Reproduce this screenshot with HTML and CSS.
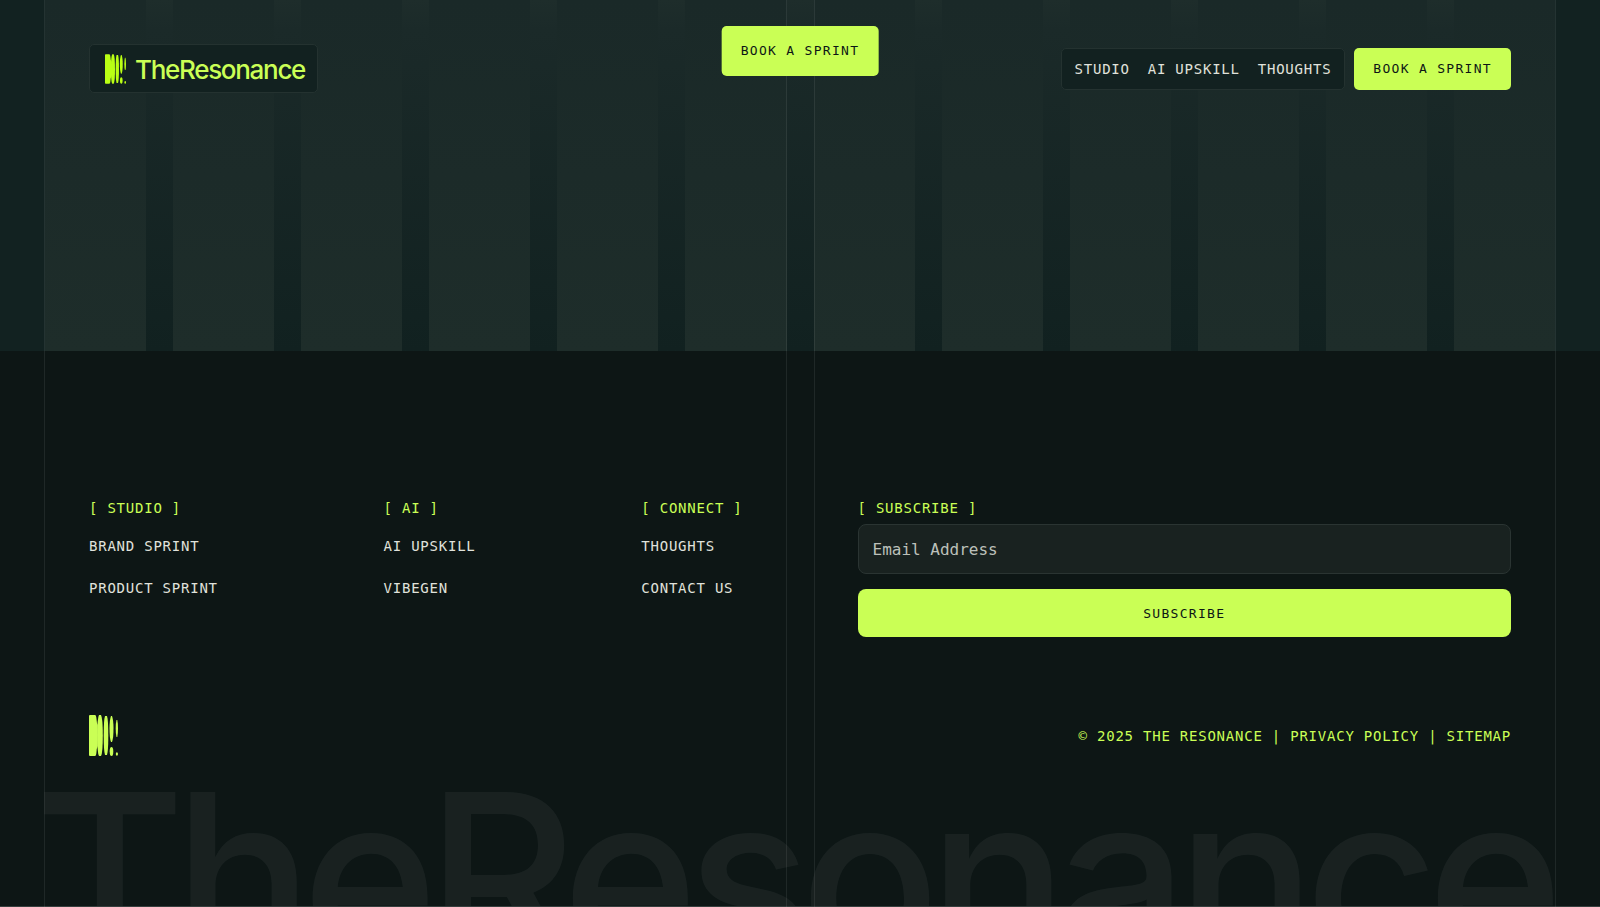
FILE: index.html
```html
<!DOCTYPE html>
<html lang="en">
<head>
    <title>TheResonance</title>
    <meta charset="UTF-8">
    <meta name="viewport" content="width=device-width, initial-scale=1">
    <link rel="stylesheet" href="styles.css">
</head>

<body>
    <svg width="0" height="0" class="sprite" aria-hidden="true">
        <symbol id="mark" viewBox="0 0 29 41">
            <path d="M1 0H6Q7.200 0 7.500 4Q7.700 8 8.800 10V31Q7.700 33 7.500 37Q7.200 41 6 41H1Q0 41 0 40V1Q0 0 1 0Z"/>
            <path d="M10 0H12Q13.800 3 13.800 20.500Q13.800 38 12 41H10Q8.200 38 8.200 20.500Q8.200 3 10 0Z"/>
            <path d="M16 1H18Q19.300 5 19.300 20.500Q19.300 36 18 40H16Q14.700 36 14.700 20.500Q14.700 5 16 1Z"/>
            <path d="M22 1H23Q24.500 5 24.500 13.500Q24.500 23 23 27H22Q20.500 23 20.500 13.500Q20.500 5 22 1Z"/>
            <ellipse cx="22.500" cy="36.500" rx="1.800" ry="4.500"/>
            <path d="M27.500 5H28.300Q29 8 29 13.500Q29 19 28.300 22H27.500Q26.700 19 26.700 13.500Q26.700 8 27.500 5Z"/>
            <ellipse cx="27.900" cy="39" rx="1.100" ry="1.800"/>
        </symbol>
    </svg>

    <div class="page">
        <section class="hero">
            <div class="stripes">
                <span></span><span></span><span></span><span></span><span></span><span></span>
                <span></span><span></span><span></span><span></span><span></span><span></span>
            </div>
            <header class="header">
                <a href="#" class="logo">
                    <svg class="logo-mark"><use href="#mark"/></svg>
                    <span class="logo-text">TheResonance</span>
                </a>
                <div class="header-right">
                    <nav class="nav">
                        <a href="#">Studio</a>
                        <a href="#">AI Upskill</a>
                        <a href="#">Thoughts</a>
                    </nav>
                    <a href="#" class="btn">Book a Sprint</a>
                </div>
            </header>
        </section>

        <footer class="footer">
            <div class="footer-top">
                <div class="footer-links">
                    <div class="links-col">
                        <h2>[ Studio ]</h2>
                        <a href="#">Brand Sprint</a>
                        <a href="#">Product Sprint</a>
                    </div>
                    <div class="links-col">
                        <h2>[ AI ]</h2>
                        <a href="#">AI Upskill</a>
                        <a href="#">Vibegen</a>
                    </div>
                    <div class="links-col">
                        <h2>[ Connect ]</h2>
                        <a href="#">Thoughts</a>
                        <a href="#">Contact us</a>
                    </div>
                </div>
                <form class="subscribe">
                    <label for="email">[ Subscribe ]</label>
                    <input type="email" id="email" placeholder="Email Address">
                    <button type="button">Subscribe</button>
                </form>
            </div>
            <div class="footer-bottom">
                <svg class="footer-mark"><use href="#mark"/></svg>
                <p class="legal">© 2025 The Resonance | <a href="#">Privacy Policy</a> | <a href="#">Sitemap</a></p>
            </div>
            <div class="wordmark">TheResonance</div>
        </footer>

        <div class="guides"><span></span><span></span></div>
        <a href="#" class="btn btn-float">Book a Sprint</a>
    </div>
</body>
</html>
```
FILE: styles.css
```css
* {
    box-sizing: border-box;
}

body {
    margin: 0;
    background: #0d1615;
    color: #e0e2dc;
    font-family: "DejaVu Sans Mono", "Liberation Mono", monospace;
    font-size: 14px;
    line-height: 20px;
    letter-spacing: 0.055em;
}

a {
    color: inherit;
    text-decoration: none;
    text-transform: uppercase;
}

.sprite {
    position: absolute;
}

.page {
    position: relative;
    overflow: hidden;
}

/* hero */
.hero {
    position: relative;
    height: 351px;
    background: linear-gradient(#1e2d2b, #1b2a29 30px, #112120) no-repeat 45px 0 / calc(100% - 90px) 100%, #122221;
}

.stripes {
    position: absolute;
    inset: 0;
    padding: 0 45px;
    display: grid;
    grid-template-columns: repeat(12, 1fr);
    gap: 27px;
}

.stripes span {
    background: linear-gradient(#1a2928, #1e2d2a);
}

.header {
    position: relative;
    display: flex;
    justify-content: space-between;
    align-items: center;
    padding: 44px 89px;
}

.logo {
    display: flex;
    align-items: center;
    gap: 9px;
    height: 49px;
    padding: 0 12px 0 15px;
    border: 1px solid #243230;
    border-radius: 5px;
    background: #122120;
    color: #caff55;
    text-transform: none;
}

.logo-mark {
    width: 21px;
    height: 30px;
    fill: #baff14;
}

.logo-text {
    padding-top: 2px;
    font-family: Inter, "Liberation Sans", sans-serif;
    font-size: 26px;
    font-weight: 500;
    line-height: 32px;
    letter-spacing: -0.05em;
}

.header-right {
    display: flex;
    gap: 9px;
}

.nav {
    display: flex;
    align-items: center;
    gap: 18px;
    padding: 0 13px;
    border: 1px solid #243230;
    border-radius: 5px;
    background: #122120;
}

.btn {
    display: flex;
    align-items: center;
    height: 42px;
    padding: 0 19px;
    border-radius: 5px;
    background: #caff55;
    color: #0d1615;
    font-size: 13px;
    letter-spacing: 0.1em;
}

.btn-float {
    position: absolute;
    top: 26px;
    left: 50%;
    height: 50px;
    transform: translateX(-50%);
}

/* footer */
.footer-top {
    display: grid;
    grid-template-columns: 1fr 1fr;
    gap: 27px;
    padding: 147px 45px 0;
}

.footer-links {
    display: flex;
    justify-content: space-between;
    padding: 0 44px;
}

.links-col {
    display: flex;
    flex-direction: column;
    gap: 22px;
}

.links-col h2 {
    margin: 0 0 -4px;
    color: #caff55;
    font-size: 14px;
    font-weight: 400;
    text-transform: uppercase;
}

.subscribe {
    display: flex;
    flex-direction: column;
    padding: 0 44px;
}

.subscribe label {
    margin-bottom: 6px;
    color: #caff55;
    text-transform: uppercase;
}

.subscribe input {
    height: 50px;
    margin-bottom: 15px;
    padding: 0 14px;
    border: 1px solid #2a3432;
    border-radius: 8px;
    background: #192220;
    color: #e0e2dc;
    font-family: inherit;
    font-size: 16px;
}

.subscribe input::placeholder {
    color: #bcc0ba;
}

.subscribe button {
    height: 48px;
    border: 0;
    border-radius: 8px;
    background: #caff55;
    color: #0d1615;
    font-family: inherit;
    font-size: 13px;
    letter-spacing: 0.1em;
    text-transform: uppercase;
}

.footer-bottom {
    display: flex;
    justify-content: space-between;
    align-items: center;
    padding: 78px 89px 34px;
    color: #caff55;
}

.footer-mark {
    width: 29px;
    height: 41px;
    fill: #caff55;
}

.legal {
    margin: 0;
    text-transform: uppercase;
}

/* giant name, cropped by the end of the page */
.wordmark {
    height: 117px;
    padding: 0 34px;
    overflow: hidden;
    border-bottom: 1px solid #363f3e;
    color: rgba(255, 255, 255, 0.05);
    font-family: Inter, "Liberation Sans", sans-serif;
    font-size: 14.5vw;
    font-weight: 500;
    line-height: 0.75;
    letter-spacing: -0.05em;
    white-space: nowrap;
}

/* vertical lines over the whole page */
.guides {
    position: absolute;
    inset: 0;
    display: grid;
    grid-template-columns: 1fr 1fr;
    gap: 27px;
    padding: 0 44px;
    pointer-events: none;
}

.guides span {
    border: solid rgba(255, 255, 255, 0.08);
    border-width: 0 1px;
}
```
